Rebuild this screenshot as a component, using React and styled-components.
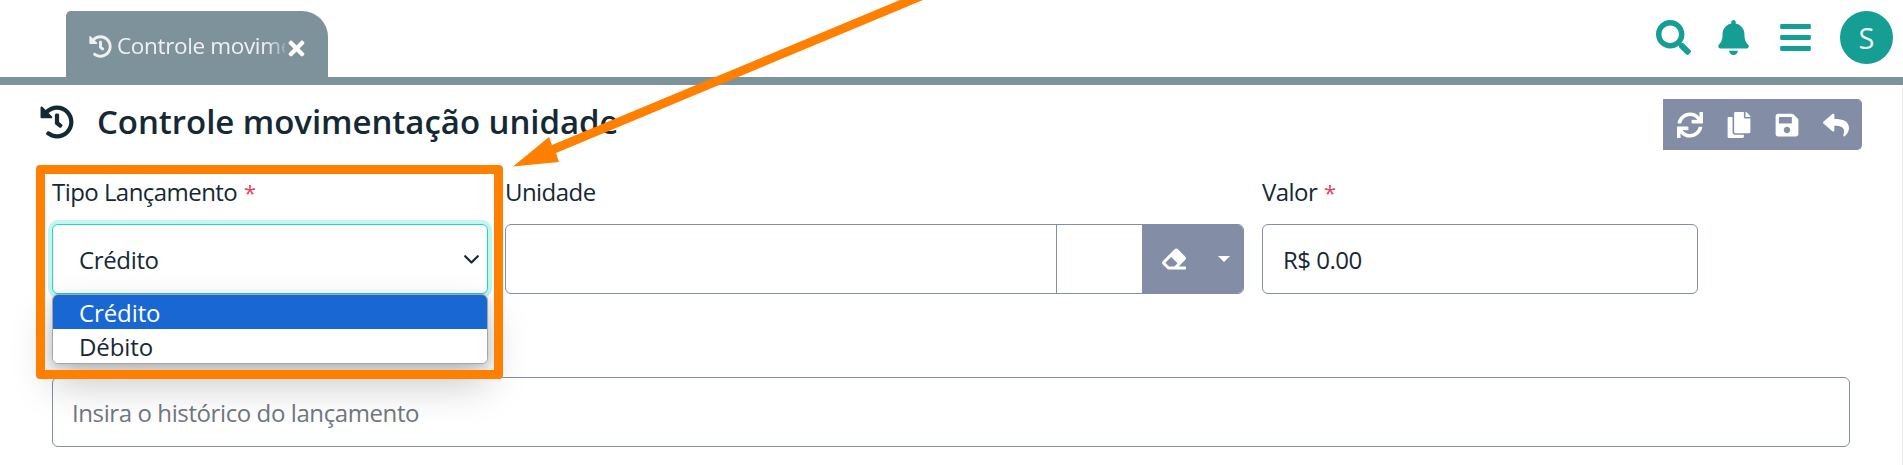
import React from 'react';
import styled, { createGlobalStyle } from 'styled-components';
import {
  FaHistory, FaTimes, FaSearch, FaBell, FaBars, FaSync, FaCopy, FaSave, FaReply, FaEraser,
} from 'react-icons/fa';

const slate = '#7e929c';
const control = '#838ea6';
const teal = '#159e94';
const ink = '#152935';
const orange = '#ff8000';

const GlobalStyle = createGlobalStyle`
  * { box-sizing: border-box; }
  body {
    margin: 0;
    background: #fff;
    color: ${ink};
    font-family: "Open Sans", "Noto Sans", sans-serif;
    font-size: 24px;
    overflow: hidden;
  }
  svg { display: block; flex: none; }
`;

const Page = styled.div`
  position: relative;
  height: 465px;
  overflow: hidden;
`;

const TopBar = styled.header`
  display: flex;
  justify-content: space-between;
  height: 85px;
  padding: 11px 10px 0 66px;
  border-bottom: 8px solid ${slate};
`;

const Tab = styled.div`
  display: flex;
  align-items: center;
  width: 262px;
  height: 66px;
  padding: 5px 20px 0 23px;
  border-radius: 5px 26px 0 0;
  background: ${slate};
  color: #f0f0f0;
`;

const TabLabel = styled.span`
  flex: 1;
  margin: -1px 0 0 5px;
  overflow: hidden;
  white-space: nowrap;
  font-size: 22.5px;
  line-height: 32px;
  letter-spacing: -0.35px;
  mask-image: linear-gradient(to right, #000 150px, transparent 173px);
`;

const CloseIcon = styled(FaTimes)`
  margin-top: 3px;
  color: #fff;
`;

const Actions = styled.div`
  display: flex;
  align-items: flex-start;
  color: ${teal};
`;

const ActionIcon = styled.span`
  display: flex;
  margin: ${(p) => p.$top}px ${(p) => p.$gap}px 0 0;
`;

const Avatar = styled.div`
  width: 53px;
  height: 53px;
  border-radius: 50%;
  background: ${teal};
  color: #f0f0f0;
  font-size: 29px;
  line-height: 54px;
  text-align: center;
`;

const Content = styled.main`
  height: 380px;
  padding: 14px 0 0 40px;
  border-right: 1px solid #ececec;
`;

const TitleRow = styled.div`
  display: flex;
  align-items: flex-start;
  justify-content: space-between;
  height: 75px;
  padding-right: 40px;
`;

const Heading = styled.div`
  display: flex;
  align-items: center;
  gap: 23px;
`;

const Title = styled.h1`
  margin: 0;
  padding-top: 1px;
  font-size: 33px;
  font-weight: 600;
  line-height: 44px;
  letter-spacing: -0.05px;
  white-space: nowrap;
`;

const Toolbar = styled.div`
  display: flex;
  align-items: center;
  justify-content: space-between;
  width: 199px;
  height: 51px;
  padding: 0 13px 0 14px;
  border-radius: 0 5px 5px 0;
  background: ${control};
  color: #fff;
`;

const FormRow = styled.div`
  display: flex;
  height: 203px;
  padding-left: 12px;
`;

const Field = styled.div`
  width: ${(p) => p.$width}px;
  margin-right: ${(p) => p.$gap || 0}px;
`;

const Label = styled.div`
  height: 50px;
  line-height: 35px;
  letter-spacing: -0.55px;
  white-space: nowrap;
`;

const Required = styled.span`
  margin-left: 1px;
  color: #e0455f;
  font-size: 22px;
`;

const Box = styled.div`
  display: flex;
  align-items: center;
  height: 70px;
  padding: 0 ${(p) => p.$pad || 20}px;
  border: 1px solid ${control};
  border-radius: 6px;
  background: #fff;
  letter-spacing: -0.5px;
  white-space: nowrap;
`;

const SelectBox = styled(Box)`
  position: relative;
  justify-content: space-between;
  padding: 0 8px 0 26px;
  border-color: #1fd6c5;
  box-shadow: 0 0 0 4px #c5f5f0;
  letter-spacing: -0.35px;
`;

const Menu = styled.div`
  position: absolute;
  top: 69px;
  left: -1px;
  z-index: 2;
  width: 436px;
  height: 70px;
  overflow: hidden;
  border: 1px solid #a6a6a6;
  border-radius: 6px;
  background: #fff;
  box-shadow: 0 20px 40px rgba(0, 0, 0, 0.22), 0 2px 10px rgba(0, 0, 0, 0.15);
`;

const Option = styled.div`
  height: 34px;
  padding-left: 26px;
  line-height: 35px;
  letter-spacing: -0.1px;
  background: ${(p) => (p.$active ? '#1967d2' : '#fff')};
  color: ${(p) => (p.$active ? '#fff' : ink)};
`;

const LookupGroup = styled.div`
  display: flex;
  height: 70px;
  overflow: hidden;
  border: 1px solid ${control};
  border-radius: 6px;
`;

const LookupInput = styled.div`
  width: ${(p) => p.$width}px;
  border-right: 1px solid ${control};
`;

const LookupButtons = styled.div`
  display: flex;
  flex: 1;
  align-items: center;
  justify-content: space-between;
  padding: 0 13px 0 19px;
  background: ${control};
  color: #fff;
`;

const Caret = styled.span`
  border: 6px solid transparent;
  border-top-color: #fff;
  border-bottom: 0;
`;

const HistoryBox = styled(Box)`
  width: 1798px;
  margin-left: 12px;
  color: #707880;
  letter-spacing: -0.4px;
`;

const Highlight = styled.div`
  position: absolute;
  z-index: 3;
  top: 165px;
  left: 36px;
  width: 467px;
  height: 214px;
  border: 9px solid ${orange};
  border-radius: 4px;
`;

const Pointer = styled.svg`
  position: absolute;
  z-index: 3;
  top: 0;
  left: 500px;
`;

export default function App() {
  return (
    <Page>
      <GlobalStyle />
      <TopBar>
        <Tab>
          <FaHistory size={23} />
          <TabLabel>Controle movimentação</TabLabel>
          <CloseIcon size={23} />
        </Tab>
        <Actions>
          <ActionIcon $top={9} $gap={25}><FaSearch size={35} /></ActionIcon>
          <ActionIcon $top={9} $gap={27}><FaBell size={35} /></ActionIcon>
          <ActionIcon $top={9} $gap={27}><FaBars size={35} /></ActionIcon>
          <Avatar>S</Avatar>
        </Actions>
      </TopBar>
      <Content>
        <TitleRow>
          <Heading>
            <FaHistory size={34} />
            <Title>Controle movimentação unidade</Title>
          </Heading>
          <Toolbar>
            <FaSync size={26} />
            <FaCopy size={26} />
            <FaSave size={26} />
            <FaReply size={26} />
          </Toolbar>
        </TitleRow>
        <FormRow>
          <Field $width={436} $gap={17}>
            <Label>Tipo Lançamento <Required>*</Required></Label>
            <SelectBox>
              Crédito
              <svg width="15" height="9" viewBox="0 0 15 9" fill="none" stroke={ink} strokeWidth="2.2" strokeLinecap="round" strokeLinejoin="round">
                <path d="M1.2 1.2 7.5 7.5 13.8 1.2" />
              </svg>
              <Menu>
                <Option $active>Crédito</Option>
                <Option>Débito</Option>
              </Menu>
            </SelectBox>
          </Field>
          <Field $width={739} $gap={18}>
            <Label>Unidade</Label>
            <LookupGroup>
              <LookupInput $width={551} />
              <LookupInput $width={86} />
              <LookupButtons>
                <FaEraser size={24} />
                <Caret />
              </LookupButtons>
            </LookupGroup>
          </Field>
          <Field $width={436}>
            <Label>Valor <Required>*</Required></Label>
            <Box>R$ 0.00</Box>
          </Field>
        </FormRow>
        <HistoryBox $pad={19}>Insira o histórico do lançamento</HistoryBox>
      </Content>
      <Highlight />
      <Pointer width="440" height="180" viewBox="0 0 440 180" fill={orange}>
        <path d="M400 0 52 145 49 137 13 166.500 59 162 56 153 423 0Z" />
      </Pointer>
    </Page>
  );
}
